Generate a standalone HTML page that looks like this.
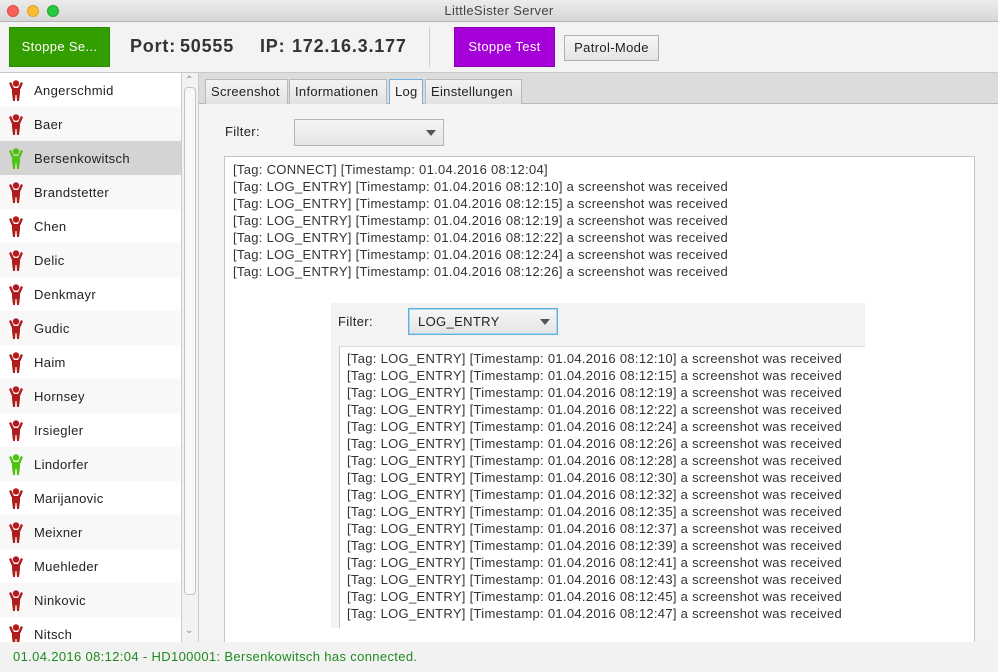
<!DOCTYPE html>
<html><head><meta charset="utf-8"><style>
*{box-sizing:border-box;margin:0;padding:0}
body{width:998px;height:672px;overflow:hidden;font-family:"Liberation Sans",sans-serif;font-size:13px;letter-spacing:0.35px;color:#222;background:#f2f2f2;position:relative}
.abs{position:absolute}
.title{left:0;top:0;width:998px;height:22px;background:linear-gradient(#ececec,#d6d6d6);border-bottom:1px solid #b5b5b5;text-align:center;line-height:22px;font-size:13px;color:#444}
.dot{top:5px;width:12px;height:12px;border-radius:50%}
.tb{top:22px;left:0;width:998px;height:51px;background:#f3f3f3;border-bottom:1px solid #c8c8c8}
.btn{position:absolute;text-align:center;font-size:13px}
.side{left:0;top:73px;width:182px;height:569px;background:#fff;overflow:hidden;border-right:1px solid #ccc}
.row{height:34px;line-height:35px;padding-left:34px;position:relative;font-size:13px;color:#222}
.row:nth-child(even){background:#f8f8f8}
.row svg{position:absolute;left:8px;top:7px}
.sb{left:182px;top:73px;width:17px;height:569px;background:#f2f2f2;border-right:1px solid #ccc}
.tabbar{left:199px;top:73px;width:799px;height:31px;background:#dcdcdc;border-bottom:1px solid #b8b8b8}
.tab{position:absolute;top:6px;height:25px;border:1px solid #b8b8b8;border-bottom:none;background:linear-gradient(#f3f3f3,#e2e2e2);line-height:24px;padding:0 5px;font-size:13px;letter-spacing:0.3px}
.content{left:199px;top:104px;width:799px;height:538px;background:#f4f4f4}
.log{line-height:17px;font-size:13px;letter-spacing:0.3px;color:#333;white-space:pre}
.combo{border:1px solid #b5b5b5;background:linear-gradient(#f6f6f6,#e4e4e4)}
.arr{position:absolute;width:0;height:0;border-left:5px solid transparent;border-right:5px solid transparent;border-top:6px solid #555}
.big{position:absolute;top:14px;font-size:18px;font-weight:bold;color:#333;letter-spacing:0.8px}
</style></head><body>
<div class="abs title">LittleSister Server</div>
<div class="abs dot" style="left:7px;background:#fc5f57;border:1px solid #de4a42"></div>
<div class="abs dot" style="left:27px;background:#fdbc2e;border:1px solid #dea123"></div>
<div class="abs dot" style="left:47px;background:#28c840;border:1px solid #1fa732"></div>
<div class="abs tb">
 <div class="btn" style="left:9px;top:5px;width:101px;height:40px;background:#339e00;border:1px solid #2b8a00;color:#fff;line-height:38px">Stoppe Se...</div>
 <div class="big" style="left:130px">Port:</div>
 <div class="big" style="left:180px">50555</div>
 <div class="big" style="left:260px">IP:</div>
 <div class="big" style="left:292px">172.16.3.177</div>
 <div class="abs" style="left:429px;top:5px;width:1px;height:40px;background:#ccc"></div>
 <div class="btn" style="left:454px;top:5px;width:101px;height:40px;background:#a600d9;border:1px solid #8d00b8;color:#fff;line-height:38px">Stoppe Test</div>
 <div class="btn" style="left:564px;top:13px;width:95px;height:26px;background:linear-gradient(#f6f6f6,#e4e4e4);border:1px solid #b0b0b0;line-height:24px">Patrol-Mode</div>
</div>
<svg width="0" height="0" style="position:absolute"><defs><g id="p"><circle cx="8" cy="3.5" r="3.2"/><path d="M1 3 L3 2 L6 8 L10 8 L13 2 L15 3 L12 10 L12 13 L11 21 L9 21 L8.5 15 L7.5 15 L7 21 L5 21 L4 13 L4 10 Z"/></g></defs></svg>
<div class="abs side">
<div class="row" style="background:#fff"><svg width="16" height="22" fill="#b01c1c"><use href="#p"/></svg>Angerschmid</div>
<div class="row"><svg width="16" height="22" fill="#b01c1c"><use href="#p"/></svg>Baer</div>
<div class="row" style="background:#d4d4d4"><svg width="16" height="22" fill="#4fc211"><use href="#p"/></svg>Bersenkowitsch</div>
<div class="row"><svg width="16" height="22" fill="#b01c1c"><use href="#p"/></svg>Brandstetter</div>
<div class="row" style="background:#fff"><svg width="16" height="22" fill="#b01c1c"><use href="#p"/></svg>Chen</div>
<div class="row"><svg width="16" height="22" fill="#b01c1c"><use href="#p"/></svg>Delic</div>
<div class="row" style="background:#fff"><svg width="16" height="22" fill="#b01c1c"><use href="#p"/></svg>Denkmayr</div>
<div class="row"><svg width="16" height="22" fill="#b01c1c"><use href="#p"/></svg>Gudic</div>
<div class="row" style="background:#fff"><svg width="16" height="22" fill="#b01c1c"><use href="#p"/></svg>Haim</div>
<div class="row"><svg width="16" height="22" fill="#b01c1c"><use href="#p"/></svg>Hornsey</div>
<div class="row" style="background:#fff"><svg width="16" height="22" fill="#b01c1c"><use href="#p"/></svg>Irsiegler</div>
<div class="row"><svg width="16" height="22" fill="#4fc211"><use href="#p"/></svg>Lindorfer</div>
<div class="row" style="background:#fff"><svg width="16" height="22" fill="#b01c1c"><use href="#p"/></svg>Marijanovic</div>
<div class="row"><svg width="16" height="22" fill="#b01c1c"><use href="#p"/></svg>Meixner</div>
<div class="row" style="background:#fff"><svg width="16" height="22" fill="#b01c1c"><use href="#p"/></svg>Muehleder</div>
<div class="row"><svg width="16" height="22" fill="#b01c1c"><use href="#p"/></svg>Ninkovic</div>
<div class="row" style="background:#fff"><svg width="16" height="22" fill="#b01c1c"><use href="#p"/></svg>Nitsch</div>
</div>
<div class="abs sb">
 <div class="abs" style="left:3px;top:2px;font-size:10px;color:#888">&#8963;</div>
 <div class="abs" style="left:2px;top:14px;width:12px;height:508px;background:#f8f8f8;border:1px solid #c4c4c4;border-radius:4px"></div>
 <div class="abs" style="left:3px;top:552px;font-size:10px;color:#888">&#8964;</div>
</div>
<div class="abs tabbar">
 <div class="tab" style="left:6px;width:83px">Screenshot</div>
 <div class="tab" style="left:90px;width:98px">Informationen</div>
 <div class="tab" style="left:190px;width:34px;background:#f4f4f4;border-color:#6db3e0;height:26px">Log</div>
 <div class="tab" style="left:226px;width:97px">Einstellungen</div>
</div>
<div class="abs content"></div>
<div class="abs" style="left:225px;top:124px">Filter:</div>
<div class="abs combo" style="left:294px;top:119px;width:150px;height:27px"><div class="arr" style="left:131px;top:10px"></div></div>
<div class="abs" style="left:224px;top:156px;width:751px;height:486px;background:#fff;border:1px solid #c4c4c4;border-bottom:none"></div>
<div class="abs log" style="left:233px;top:161px">[Tag: CONNECT] [Timestamp: 01.04.2016 08:12:04]
[Tag: LOG_ENTRY] [Timestamp: 01.04.2016 08:12:10] a screenshot was received
[Tag: LOG_ENTRY] [Timestamp: 01.04.2016 08:12:15] a screenshot was received
[Tag: LOG_ENTRY] [Timestamp: 01.04.2016 08:12:19] a screenshot was received
[Tag: LOG_ENTRY] [Timestamp: 01.04.2016 08:12:22] a screenshot was received
[Tag: LOG_ENTRY] [Timestamp: 01.04.2016 08:12:24] a screenshot was received
[Tag: LOG_ENTRY] [Timestamp: 01.04.2016 08:12:26] a screenshot was received</div>
<div class="abs" style="left:331px;top:303px;width:534px;height:325px;background:#f3f3f3"></div>
<div class="abs" style="left:338px;top:314px">Filter:</div>
<div class="abs combo" style="left:408px;top:308px;width:150px;height:27px;border:1px solid #5fb0de;box-shadow:0 0 0 1px #a8d6f0 inset"><div class="abs" style="left:9px;top:5px">LOG_ENTRY</div><div class="arr" style="left:131px;top:10px"></div></div>
<div class="abs" style="left:339px;top:346px;width:526px;height:282px;background:#fff;border-left:1px solid #c8c8c8;border-top:1px solid #ddd"></div>
<div class="abs log" style="left:347px;top:350px">[Tag: LOG_ENTRY] [Timestamp: 01.04.2016 08:12:10] a screenshot was received
[Tag: LOG_ENTRY] [Timestamp: 01.04.2016 08:12:15] a screenshot was received
[Tag: LOG_ENTRY] [Timestamp: 01.04.2016 08:12:19] a screenshot was received
[Tag: LOG_ENTRY] [Timestamp: 01.04.2016 08:12:22] a screenshot was received
[Tag: LOG_ENTRY] [Timestamp: 01.04.2016 08:12:24] a screenshot was received
[Tag: LOG_ENTRY] [Timestamp: 01.04.2016 08:12:26] a screenshot was received
[Tag: LOG_ENTRY] [Timestamp: 01.04.2016 08:12:28] a screenshot was received
[Tag: LOG_ENTRY] [Timestamp: 01.04.2016 08:12:30] a screenshot was received
[Tag: LOG_ENTRY] [Timestamp: 01.04.2016 08:12:32] a screenshot was received
[Tag: LOG_ENTRY] [Timestamp: 01.04.2016 08:12:35] a screenshot was received
[Tag: LOG_ENTRY] [Timestamp: 01.04.2016 08:12:37] a screenshot was received
[Tag: LOG_ENTRY] [Timestamp: 01.04.2016 08:12:39] a screenshot was received
[Tag: LOG_ENTRY] [Timestamp: 01.04.2016 08:12:41] a screenshot was received
[Tag: LOG_ENTRY] [Timestamp: 01.04.2016 08:12:43] a screenshot was received
[Tag: LOG_ENTRY] [Timestamp: 01.04.2016 08:12:45] a screenshot was received
[Tag: LOG_ENTRY] [Timestamp: 01.04.2016 08:12:47] a screenshot was received</div>
<div class="abs" style="left:0;top:642px;width:998px;height:30px;background:#f2f2f2;color:#1f8a1f;line-height:29px;padding-left:13px">01.04.2016 08:12:04 - HD100001: Bersenkowitsch has connected.</div>
</body></html>
